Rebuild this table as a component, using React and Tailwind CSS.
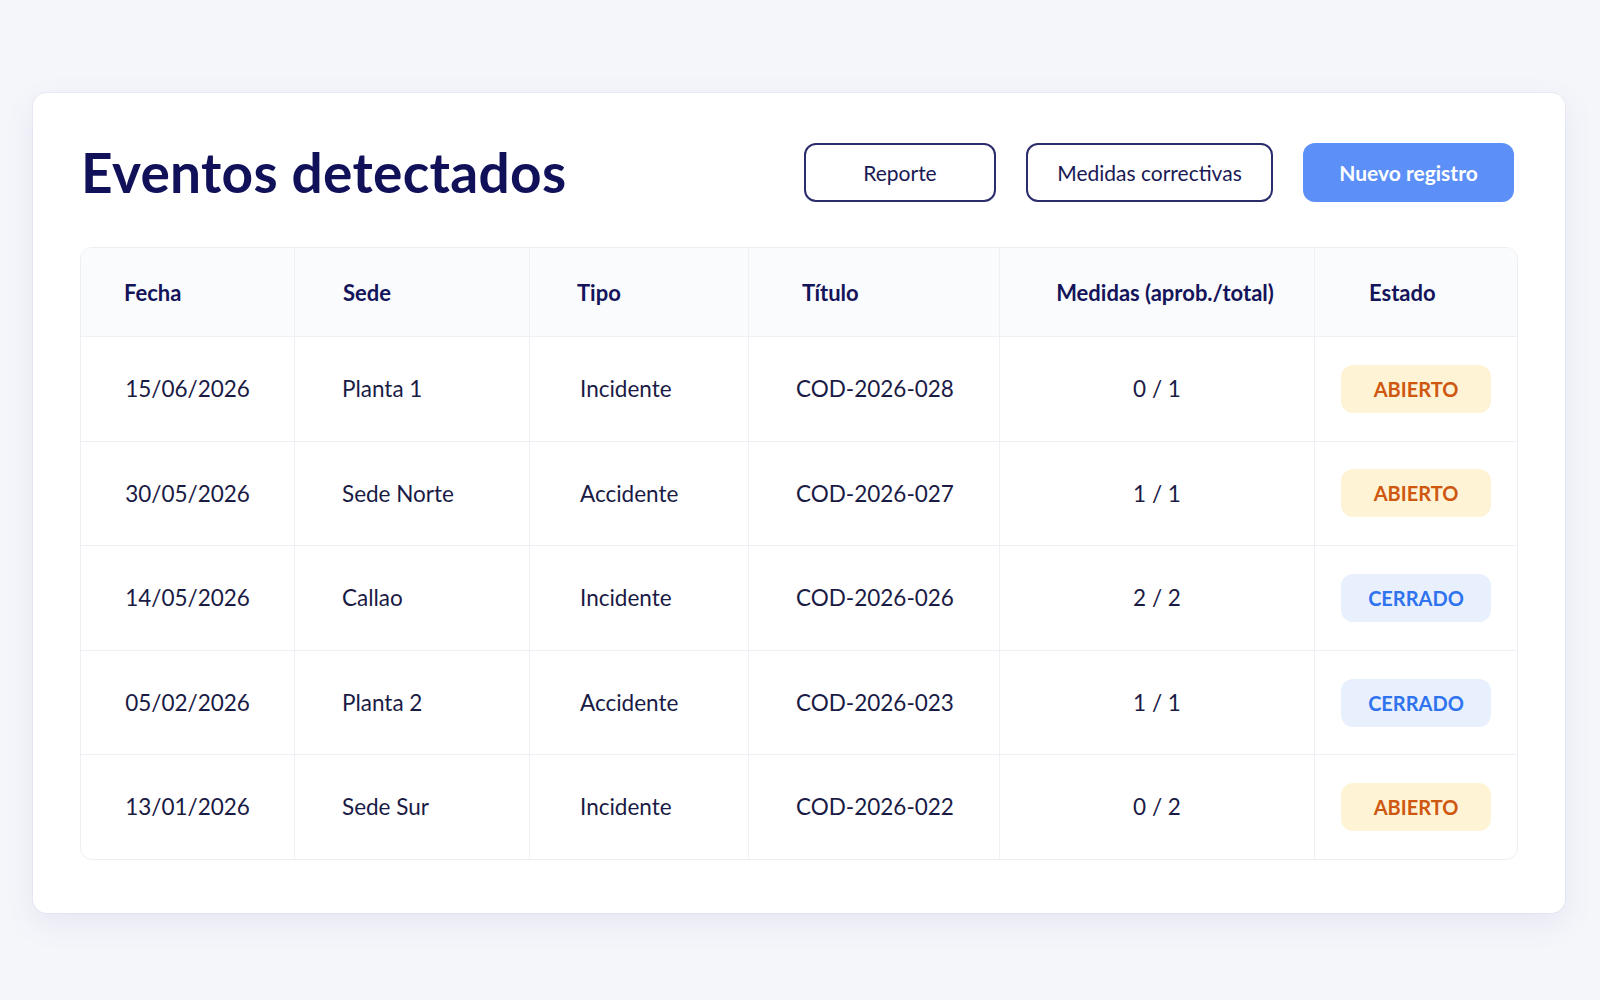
import React from "react";

const rows = [
  { fecha: "15/06/2026", sede: "Planta 1", tipo: "Incidente", titulo: "COD-2026-028", medidas: "0 / 1", estado: "ABIERTO" },
  { fecha: "30/05/2026", sede: "Sede Norte", tipo: "Accidente", titulo: "COD-2026-027", medidas: "1 / 1", estado: "ABIERTO" },
  { fecha: "14/05/2026", sede: "Callao", tipo: "Incidente", titulo: "COD-2026-026", medidas: "2 / 2", estado: "CERRADO" },
  { fecha: "05/02/2026", sede: "Planta 2", tipo: "Accidente", titulo: "COD-2026-023", medidas: "1 / 1", estado: "CERRADO" },
  { fecha: "13/01/2026", sede: "Sede Sur", tipo: "Incidente", titulo: "COD-2026-022", medidas: "0 / 2", estado: "ABIERTO" },
];

const cols = "grid grid-cols-[213px_235px_219px_251px_315px_1fr]";

function Badge({ estado }) {
  if (estado === "ABIERTO") {
    return (
      <span className="flex h-[48px] w-[150px] items-center justify-center rounded-[12px] bg-[#fef3d4] text-[20px] font-bold text-[#cf5810]">
        ABIERTO
      </span>
    );
  }
  return (
    <span className="flex h-[48px] w-[150px] items-center justify-center rounded-[12px] bg-[#e9f0fd] text-[20px] font-bold text-[#2f73ee]">
      CERRADO
    </span>
  );
}

export default function App() {
  return (
    <div className="min-h-screen w-full bg-[#f5f6fa] pt-[93px] pb-[87px] font-['Lato','Noto_Sans',sans-serif]">
      <div className="ml-[33px] w-[1532px] rounded-[14px] bg-white px-[47px] pt-[50px] pb-[53px] shadow-[0_10px_30px_rgba(90,100,190,0.10),0_0_0_1px_rgba(230,232,242,0.6)]">
        <div className="flex h-[59px] items-center justify-between">
          <h1 className="ml-[1px] text-[55px] leading-none font-bold tracking-[0.3px] text-[#11115a]">
            Eventos detectados
          </h1>
          <div className="mr-[4px] flex items-center gap-[30px]">
            <button className="flex h-[59px] w-[192px] items-center justify-center rounded-[12px] border-2 border-[#2b2c6b] bg-white text-[21px] text-[#1a1a55]">
              Reporte
            </button>
            <button className="flex h-[59px] w-[247px] items-center justify-center rounded-[12px] border-2 border-[#2b2c6b] bg-white text-[21px] text-[#1a1a55]">
              Medidas correctivas
            </button>
            <button className="flex h-[59px] w-[211px] items-center justify-center rounded-[12px] bg-[#5c90f8] text-[21px] font-bold text-white">
              Nuevo registro
            </button>
          </div>
        </div>

        <div className="mt-[45px] overflow-hidden rounded-[12px] border border-[#eceef4]">
          <div className={`${cols} h-[88px] bg-[#fafbfd] text-[22px] font-bold text-[#14145a]`}>
            <div className="flex items-center pl-[43px]">Fecha</div>
            <div className="flex items-center border-l border-[#eef0f5] pl-[48px]">Sede</div>
            <div className="flex items-center border-l border-[#eef0f5] pl-[47px]">Tipo</div>
            <div className="flex items-center border-l border-[#eef0f5] pl-[53px]">Título</div>
            <div className="flex items-center justify-center border-l border-[#eef0f5] pl-[16px]">Medidas (aprob./total)</div>
            <div className="flex items-center border-l border-[#eef0f5] pl-[54px]">Estado</div>
          </div>
          {rows.map((r) => (
            <div key={r.titulo} className={`${cols} h-[104.6px] border-t border-[#eef0f5] text-[22.5px] text-[#1a1b45]`}>
              <div className="flex items-center justify-center">{r.fecha}</div>
              <div className="flex items-center border-l border-[#eef0f5] pl-[47px]">{r.sede}</div>
              <div className="flex items-center border-l border-[#eef0f5] pl-[50px]">{r.tipo}</div>
              <div className="flex items-center border-l border-[#eef0f5] pl-[47px]">{r.titulo}</div>
              <div className="flex items-center justify-center border-l border-[#eef0f5]">{r.medidas}</div>
              <div className="flex items-center justify-center border-l border-[#eef0f5]">
                <Badge estado={r.estado} />
              </div>
            </div>
          ))}
        </div>
      </div>
    </div>
  );
}
